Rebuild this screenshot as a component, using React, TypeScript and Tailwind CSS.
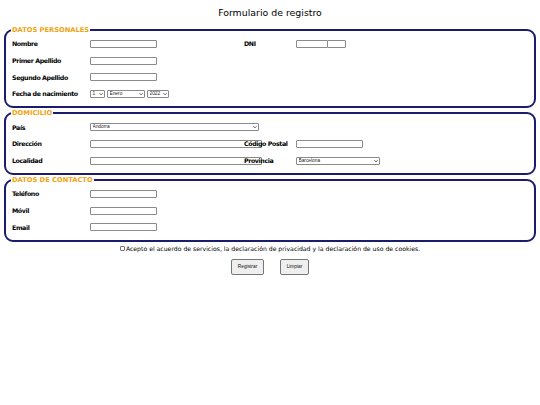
import { ReactNode } from 'react'

const labelCls = "w-[78px] shrink-0 font-bold text-[6.3px] tracking-[-0.4px] text-black whitespace-nowrap"
const label2Cls = "relative w-[52px] shrink-0 font-bold text-[6.3px] tracking-[-0.4px] text-black whitespace-nowrap"
const inputCls = "block h-[8px] border border-[#8a8a8a] rounded-[1px] bg-white"

function Chevron() {
  return (
    <svg
      className="absolute right-[2px] top-1/2 -translate-y-1/2 w-[4px] h-[3px] pointer-events-none"
      viewBox="0 0 8 6"
      fill="none"
      stroke="#222"
      strokeWidth={1.6}
    >
      <path d="M1 1.5l3 3 3-3" />
    </svg>
  )
}

function Select({ width, value }: { width: string; value: string }) {
  return (
    <div className={`relative h-[8px] leading-none ${width}`}>
      <select
        defaultValue={value}
        className="block appearance-none w-full h-[8px] py-0 border border-[#8a8a8a] rounded-[1px] bg-white pl-[1.5px] text-[4.8px] leading-[6px] text-[#222] font-['Liberation_Sans',Arial,sans-serif]"
      >
        <option>{value}</option>
      </select>
      <Chevron />
    </div>
  )
}

function Row({ children }: { children: ReactNode }) {
  return <div className="flex items-center h-[16.67px]">{children}</div>
}

function Section({ title, children }: { title: string; children: ReactNode }) {
  return (
    <fieldset className="border-2 border-[#1c1c6e] rounded-[9px] px-[6px] pt-[1.6px] pb-[4px] mb-[1.2px]">
      <legend className="px-px -ml-px text-[6.7px] leading-[8px] font-bold text-[#f2a20c] uppercase">
        {title}
      </legend>
      {children}
    </fieldset>
  )
}

export default function App() {
  return (
    <div className="w-[540px] h-[405px] bg-white px-[4px] font-['DejaVu_Sans',Verdana,sans-serif]">
      {/* Title */}
      <div className="h-[26px] flex items-center justify-center">
        <h1 className="text-[9.4px] font-normal text-black">Formulario de registro</h1>
      </div>

      <Section title="Datos personales">
        <Row>
          <span className={labelCls}>Nombre</span>
          <input className={`${inputCls} w-[67px]`} />
          <span className="w-[87px] shrink-0" />
          <span className={label2Cls}>DNI</span>
          <input className={`${inputCls} w-[32px]`} />
          <input className={`${inputCls} w-[19px] -ml-px`} />
        </Row>
        <Row>
          <span className={labelCls}>Primer Apellido</span>
          <input className={`${inputCls} w-[67px]`} />
        </Row>
        <Row>
          <span className={labelCls}>Segundo Apellido</span>
          <input className={`${inputCls} w-[67px]`} />
        </Row>
        <Row>
          <span className={labelCls}>Fecha de nacimiento</span>
          <div className="flex gap-[2px]">
            <Select width="w-[15px]" value="1" />
            <Select width="w-[38px]" value="Enero" />
            <Select width="w-[22px]" value="2022" />
          </div>
        </Row>
      </Section>

      <Section title="Domicilio">
        <Row>
          <span className={labelCls}>País</span>
          <Select width="w-[169px]" value="Andorra" />
        </Row>
        <Row>
          <span className={labelCls}>Dirección</span>
          <div className="w-[154px] shrink-0">
            <input className={`${inputCls} w-[172px]`} />
          </div>
          <span className={label2Cls}>Código Postal</span>
          <input className={`${inputCls} w-[67px]`} />
        </Row>
        <Row>
          <span className={labelCls}>Localidad</span>
          <div className="w-[154px] shrink-0">
            <input className={`${inputCls} w-[172px]`} />
          </div>
          <span className={label2Cls}>Provincia</span>
          <Select width="w-[84px]" value="Barcelona" />
        </Row>
      </Section>

      <Section title="Datos de contacto">
        <Row>
          <span className={labelCls}>Teléfono</span>
          <input className={`${inputCls} w-[67px]`} />
        </Row>
        <Row>
          <span className={labelCls}>Móvil</span>
          <input className={`${inputCls} w-[67px]`} />
        </Row>
        <Row>
          <span className={labelCls}>Email</span>
          <input className={`${inputCls} w-[67px]`} />
        </Row>
      </Section>

      {/* Terms */}
      <div className="mt-[2px] h-[10px] flex items-center justify-center text-[6.15px] text-black">
        <input
          type="checkbox"
          className="appearance-none w-[5px] h-[5px] border border-[#777] rounded-[1px] bg-white mr-px"
        />
        <span>Acepto el acuerdo de servicios, la declaración de privacidad y la declaración de uso de cookies.</span>
      </div>

      {/* Actions */}
      <div className="mt-[5px] flex justify-center gap-[16px] font-['Liberation_Sans',Arial,sans-serif] text-[4.8px] text-[#111]">
        <button className="w-[33px] h-[16px] bg-[#efefef] border border-[#767676] rounded-[2px]">Registrar</button>
        <button className="w-[29px] h-[16px] bg-[#efefef] border border-[#767676] rounded-[2px]">Limpiar</button>
      </div>
    </div>
  )
}
